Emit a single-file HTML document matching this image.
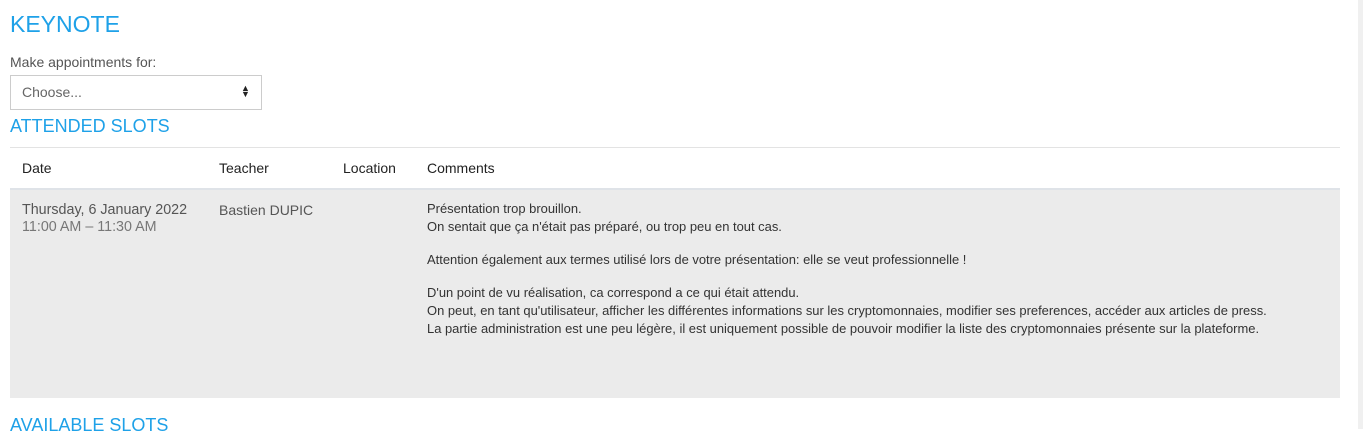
<!DOCTYPE html><html><head><style>
body{margin:0;width:1363px;height:429px;overflow:hidden;background:#fff;font-family:"Liberation Sans",sans-serif;position:relative}
.a{position:absolute;white-space:nowrap}
.h{color:#1ea1e8;font-weight:300}
.c{font-size:12.95px;color:#333;line-height:18px}
</style></head><body>
<div class="a h" style="left:10px;top:11px;font-size:23px">KEYNOTE</div>
<div class="a" style="left:10px;top:54px;font-size:14px;color:#555">Make appointments for:</div>
<div class="a" style="left:10px;top:75px;width:250px;height:33px;border:1px solid #ccc"></div>
<div class="a" style="left:22px;top:84px;font-size:14px;color:#666">Choose...</div>
<div class="a" style="left:241px;top:85px;font-size:9px;color:#222;line-height:6px">▲<br>▼</div>
<div class="a h" style="left:10px;top:116px;font-size:18px">ATTENDED SLOTS</div>
<div class="a" style="left:10px;top:147px;width:1330px;height:1px;background:#e3e3e3"></div>
<div class="a" style="left:22px;top:160px;font-size:14px;color:#222">Date</div>
<div class="a" style="left:219px;top:160px;font-size:14px;color:#222">Teacher</div>
<div class="a" style="left:343px;top:160px;font-size:14px;color:#222">Location</div>
<div class="a" style="left:427px;top:160px;font-size:14px;color:#222">Comments</div>
<div class="a" style="left:10px;top:188px;width:1330px;height:210px;background:#ebebeb;border-top:2px solid #dfe3e8;box-sizing:border-box"></div>
<div class="a" style="left:22px;top:202px;font-size:14.3px;color:#555;line-height:17px">Thursday, 6 January 2022<br><span style="color:#777">11:00 AM – 11:30 AM</span></div>
<div class="a" style="left:219px;top:202px;font-size:14px;color:#555">Bastien DUPIC</div>
<div class="a c" style="left:427px;top:200px">Présentation trop brouillon.<br>On sentait que ça n'était pas préparé, ou trop peu en tout cas.<br><div style="height:15px"></div>Attention également aux termes utilisé lors de votre présentation: elle se veut professionnelle !<br><div style="height:15px"></div>D'un point de vu réalisation, ca correspond a ce qui était attendu.<br>On peut, en tant qu'utilisateur, afficher les différentes informations sur les cryptomonnaies, modifier ses preferences, accéder aux articles de press.<br>La partie administration est une peu légère, il est uniquement possible de pouvoir modifier la liste des cryptomonnaies présente sur la plateforme.</div>
<div class="a h" style="left:10px;top:415px;font-size:18px">AVAILABLE SLOTS</div>
<div class="a" style="left:1358px;top:0;width:5px;height:429px;background:#f0f0f0"></div>
</body></html>
